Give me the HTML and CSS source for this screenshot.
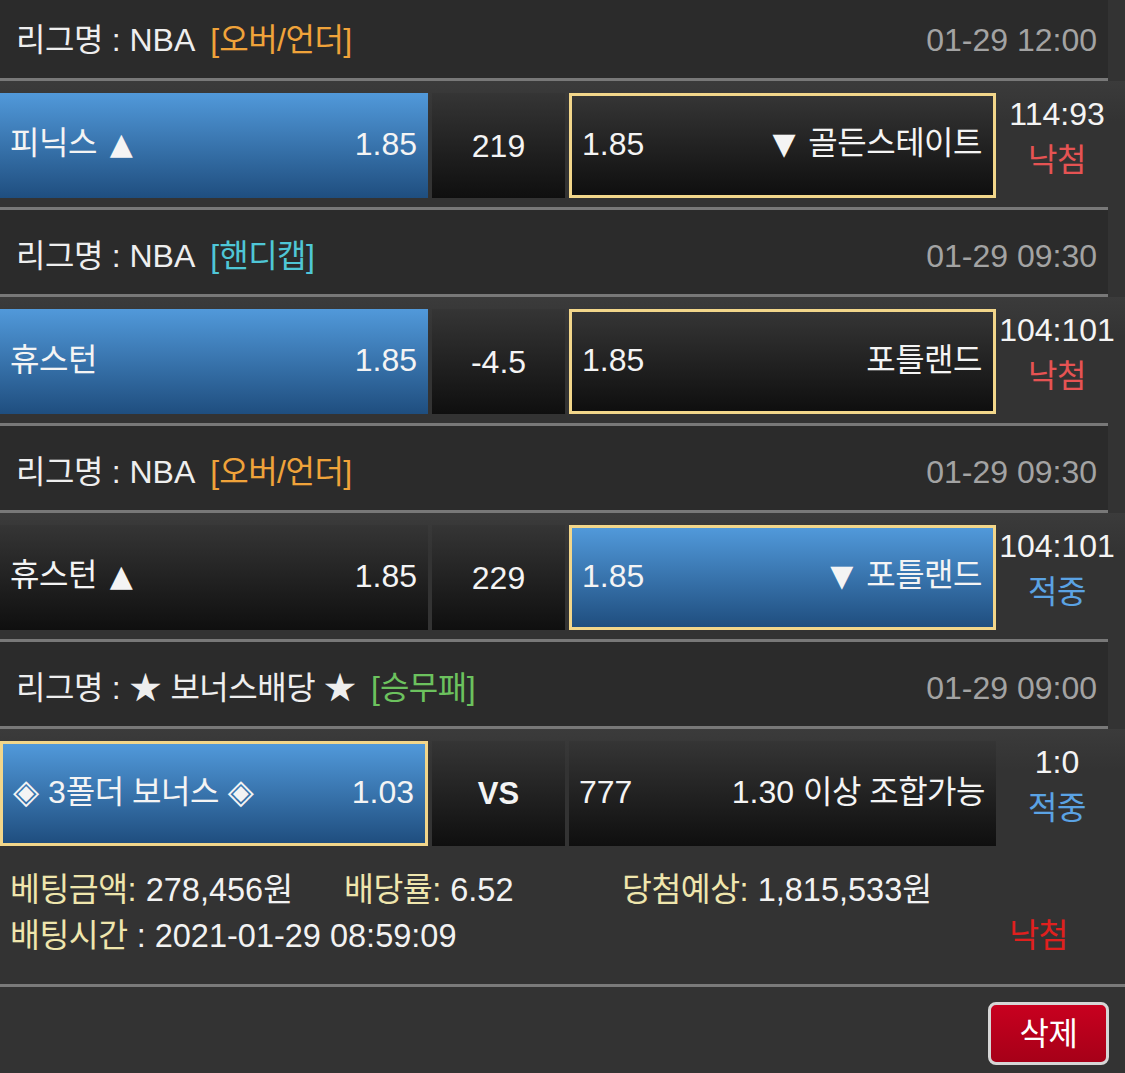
FILE: index.html
```html
<!DOCTYPE html>
<html lang="ko">
<head>
<meta charset="utf-8">
<link rel="stylesheet" href="styles.css">
</head>
<body>
<div class="page">
  <div class="league first">
    <span class="lname"><span class="k">리그명</span> : NBA</span>
    <span class="tag orange">[<span class="k">오버/언더</span>]</span>
    <span class="date">01-29 12:00</span>
  </div>
  <div class="row">
    <div class="cell side blue"><span><span class="k">피닉스</span> <span class="tri">▲</span></span><span>1.85</span></div>
    <div class="cell mid dark">219</div>
    <div class="cell side dark pick"><span>1.85</span><span><span class="tri">▼</span> <span class="k">골든스테이트</span></span></div>
    <div class="score"><div>114:93</div><div class="k lose">낙첨</div></div>
  </div>

  <div class="league">
    <span class="lname"><span class="k">리그명</span> : NBA</span>
    <span class="tag cyan">[<span class="k">핸디캡</span>]</span>
    <span class="date">01-29 09:30</span>
  </div>
  <div class="row">
    <div class="cell side blue"><span class="k">휴스턴</span><span>1.85</span></div>
    <div class="cell mid dark">-4.5</div>
    <div class="cell side dark pick"><span>1.85</span><span class="k">포틀랜드</span></div>
    <div class="score"><div>104:101</div><div class="k lose">낙첨</div></div>
  </div>

  <div class="league">
    <span class="lname"><span class="k">리그명</span> : NBA</span>
    <span class="tag orange">[<span class="k">오버/언더</span>]</span>
    <span class="date">01-29 09:30</span>
  </div>
  <div class="row">
    <div class="cell side dark"><span><span class="k">휴스턴</span> <span class="tri">▲</span></span><span>1.85</span></div>
    <div class="cell mid dark">229</div>
    <div class="cell side blue pick"><span>1.85</span><span><span class="tri">▼</span> <span class="k">포틀랜드</span></span></div>
    <div class="score"><div>104:101</div><div class="k win">적중</div></div>
  </div>

  <div class="league">
    <span class="lname"><span class="k">리그명</span> : ★ <span class="k">보너스배당</span> ★</span>
    <span class="tag green">[<span class="k">승무패</span>]</span>
    <span class="date">01-29 09:00</span>
  </div>
  <div class="row">
    <div class="cell side blue pick"><span><span class="dia">◈</span> 3<span class="k">폴더 보너스</span> <span class="dia">◈</span></span><span>1.03</span></div>
    <div class="cell mid dark vs">VS</div>
    <div class="cell side dark"><span>777</span><span>1.30 <span class="k">이상 조합가능</span></span></div>
    <div class="score"><div>1:0</div><div class="k win">적중</div></div>
  </div>

  <div class="summary">
    <div class="sline first-line">
      <span><span class="lbl k">베팅금액</span><span class="lbl">:</span> 278,456<span class="k">원</span></span>
      <span><span class="lbl k">배당률</span><span class="lbl">:</span> 6.52</span>
      <span><span class="lbl k">당첨예상</span><span class="lbl">:</span> 1,815,533<span class="k">원</span></span>
    </div>
    <div class="sline second-line">
      <span><span class="lbl k">배팅시간</span> : 2021-01-29 08:59:09</span>
      <span class="k result-lose">낙첨</span>
    </div>
  </div>

  <div class="actions">
    <button class="del k">삭제</button>
  </div>
</div>
</body>
</html>
```
FILE: styles.css
```css
html, body {
  margin: 0;
  padding: 0;
  background: #333333;
}

body {
  font-family: "Liberation Sans", "Noto Sans CJK KR", sans-serif;
  font-size: 32px;
  line-height: 46px;
  color: #f2f2f2;
  width: 1125px;
  height: 1073px;
  overflow: hidden;
}

.page {
  margin-top: -6px;
}

.k {
  letter-spacing: -0.5px;
}

.league {
  box-sizing: content-box;
  width: 1081px;
  height: 76px;
  padding: 8px 11px 0 16px;
  background: #2b2b2b;
  border-top: 3px solid #787878;
  border-bottom: 3px solid #787878;
  display: flex;
  align-items: center;
}

.league.first {
  border-top: 0;
}

.lname {
  color: #eeeeee;
}

.tag {
  margin-left: 15px;
}

.orange { color: #f0a33a; }
.cyan { color: #4fc6d6; }
.green { color: #6cc25e; }

.date {
  margin-left: auto;
  color: #a3a3a3;
}

.row {
  height: 126px;
  box-sizing: border-box;
  padding: 12px 0 9px;
  display: flex;
  gap: 4px;
  background: linear-gradient(#3b3b3b, #333333 40px);
}

.cell {
  box-sizing: border-box;
  height: 105px;
  display: flex;
  align-items: center;
  color: #f4f4f4;
}

.side {
  justify-content: space-between;
  padding: 0 11px 4px 10px;
}

.row .side:first-child {
  width: 428px;
}

.row .side:nth-child(3) {
  width: 427px;
}

.mid {
  width: 133px;
  justify-content: center;
}

.blue {
  background: linear-gradient(#5199da, #1f4e7f);
}

.dark {
  background: linear-gradient(#353535, #0f0f0f);
}

.pick {
  border: 3px solid #f2d68a;
}

.tri {
  font-family: "DejaVu Sans", sans-serif;
  font-size: 30px;
  margin-left: 4px;
}

.side span:last-child > .tri:first-child {
  margin-left: 0;
  margin-right: 4px;
}

.dia {
  font-family: "DejaVu Sans", sans-serif;
  font-size: 34px;
}

.vs {
  font-weight: bold;
  font-size: 31px;
}

.score {
  width: 122px;
  margin-left: -4px;
  margin-top: -2px;
  text-align: center;
  line-height: 46px;
  color: #f4f4f4;
}

.lose { color: #e65353; }
.win { color: #5ba3e4; }

.summary {
  height: 132px;
  box-sizing: border-box;
  padding: 12px 57px 20px 10px;
  border-bottom: 3px solid #7a7a7a;
  font-size: 32.5px;
}

.sline {
  height: 46px;
}

.first-line {
  display: grid;
  grid-template-columns: 334px 278px auto;
}

.second-line {
  display: flex;
  justify-content: space-between;
}

.lbl {
  color: #efe6ad;
}

.result-lose {
  color: #e0201e;
}

.actions {
  display: flex;
  justify-content: flex-end;
  padding: 15px 16px 0 0;
}

.del {
  width: 121px;
  height: 63px;
  border: 3px solid #d6d6d6;
  border-radius: 8px;
  background: linear-gradient(#c8001f, #a60018);
  color: #ffffff;
  font-family: "Liberation Sans", "Noto Sans CJK KR", sans-serif;
  font-size: 32px;
  line-height: 1;
  padding: 0;
}
```
